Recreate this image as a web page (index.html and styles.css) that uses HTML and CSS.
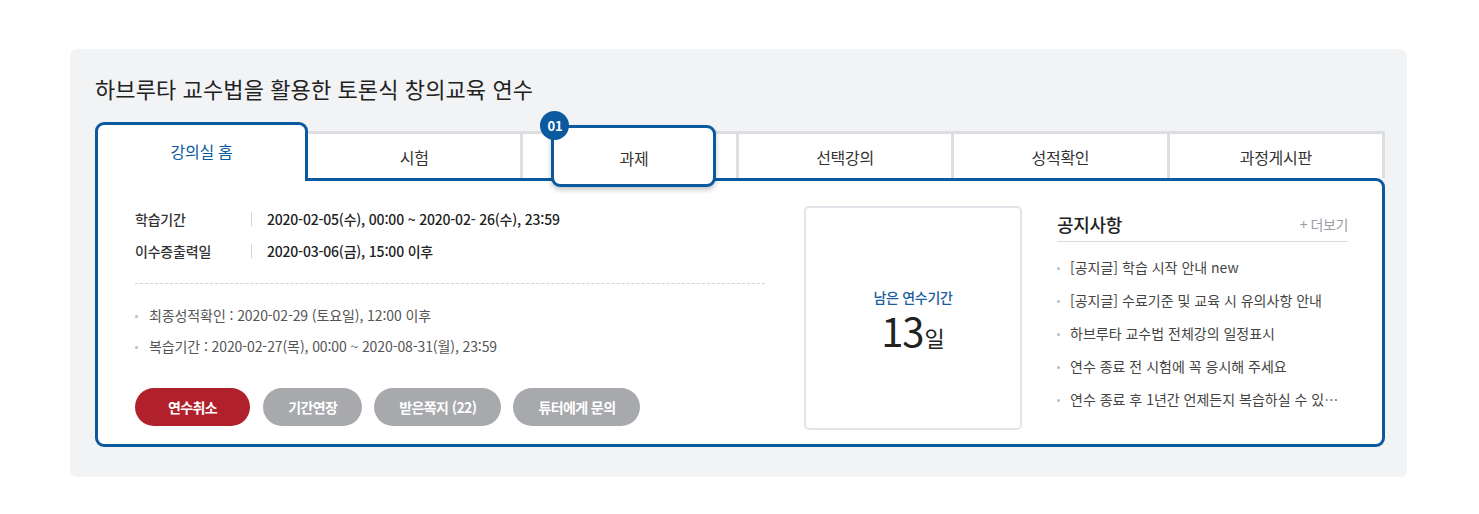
FILE: index.html
```html
<!DOCTYPE html>
<html lang="ko">
<head>
<meta charset="utf-8">
<title>강의실 홈</title>
<link rel="stylesheet" href="styles.css">
</head>
<body>
<div class="page">
  <section class="panel">
    <h1 class="course-title">하브루타 교수법을 활용한 토론식 창의교육 연수</h1>
    <nav class="tabs">
      <a class="tab tab-active">강의실 홈</a>
      <a class="tab">시험</a>
      <a class="tab tab-guided">
        <span class="tab-highlight">과제<span class="step-badge">01</span></span>
      </a>
      <a class="tab">선택강의</a>
      <a class="tab">성적확인</a>
      <a class="tab">과정게시판</a>
    </nav>
    <div class="content">
      <div class="info-col">
        <dl class="period-list">
          <div class="period-row"><dt>학습기간</dt><dd>2020-02-05(수), 00:00 ~ 2020-02- 26(수), 23:59</dd></div>
          <div class="period-row"><dt>이수증출력일</dt><dd>2020-03-06(금), 15:00 이후</dd></div>
        </dl>
        <ul class="note-list">
          <li>최종성적확인 : 2020-02-29 (토요일), 12:00 이후</li>
          <li>복습기간 : 2020-02-27(목), 00:00 ~ 2020-08-31(월), 23:59</li>
        </ul>
        <div class="btn-row">
          <button class="btn btn-red">연수취소</button>
          <button class="btn">기간연장</button>
          <button class="btn">받은쪽지 (22)</button>
          <button class="btn">튜터에게 문의</button>
        </div>
      </div>
      <div class="remain-box">
        <p class="remain-label">남은 연수기간</p>
        <p class="remain-value"><span class="remain-num">13</span><span class="remain-unit">일</span></p>
      </div>
      <div class="notice-col">
        <div class="notice-head">
          <h2>공지사항</h2>
          <a class="more">+ 더보기</a>
        </div>
        <ul class="notice-list">
          <li>[공지글] 학습 시작 안내 new</li>
          <li>[공지글] 수료기준 및 교육 시 유의사항 안내</li>
          <li>하브루타 교수법 전체강의 일정표시</li>
          <li>연수 종료 전 시험에 꼭 응시해 주세요</li>
          <li>연수 종료 후 1년간 언제든지 복습하실 수 있습니다</li>
        </ul>
      </div>
    </div>
  </section>
</div>
</body>
</html>
```

FILE: styles.css
```css
* { box-sizing: border-box; }
html, body { margin: 0; padding: 0; background: #fff; }
body {
  font-family: "Noto Sans CJK KR", "Noto Sans", sans-serif;
  color: #333;
}
.page {
  padding: 49px 72px 38px 70px;
}
.panel {
  background: #f2f3f5;
  border-radius: 7px;
  padding: 24px 22px 30px 25px;
}
.course-title {
  margin: 0 0 19px;
  font-size: 22px;
  line-height: 30px;
  font-weight: 400;
  color: #222;
  letter-spacing: 0.1px;
}
.tabs {
  display: flex;
  align-items: flex-end;
  height: 56px;
  position: relative;
  z-index: 2;
}
.tab {
  flex: 1;
  height: 47px;
  display: flex;
  align-items: center;
  justify-content: center;
  background: #fff;
  border-top: 3px solid #dcdee2;
  border-right: 3px solid #dcdee2;
  font-size: 16px;
  color: #333;
  padding-top: 2px;
  letter-spacing: -0.3px;
}
.tab-active {
  flex: 0 0 213px;
  height: 59px;
  margin-bottom: -3px;
  border: 3px solid #0b5aa0;
  border-bottom: none;
  border-radius: 9px 9px 0 0;
  color: #0b5aa0;
  align-items: flex-start;
  padding-top: 14px;
}
.tab-guided { position: relative; }
.tab-highlight {
  position: absolute;
  left: 28px;
  top: -9px;
  width: 165px;
  height: 62px;
  border: 3px solid #0b5aa0;
  border-radius: 9px;
  background: #fff;
  box-shadow: 0 3px 5px rgba(0,0,0,0.22);
  display: flex;
  align-items: center;
  justify-content: center;
  padding-top: 3px;
  font-size: 16px;
  color: #333;
}
.step-badge {
  position: absolute;
  left: -14px;
  top: -17px;
  width: 29px;
  height: 29px;
  border-radius: 50%;
  background: #0b5aa0;
  color: #fff;
  font-size: 13px;
  font-weight: 700;
  line-height: 29px;
  text-align: center;
  letter-spacing: -0.3px;
}
.content {
  position: relative;
  z-index: 1;
  background: #fff;
  border: 3px solid #0b5aa0;
  border-radius: 0 9px 9px 9px;
  display: flex;
  align-items: flex-start;
  padding: 22px 34px 14px 37px;
}
.info-col {
  width: 630px;
  flex: none;
}
.period-list { margin: 0; }
.period-row {
  display: flex;
  align-items: center;
  height: 32px;
  font-size: 14px;
  letter-spacing: -0.2px;
}
.period-row dt {
  width: 117px;
  color: #333;
  font-weight: 500;
  position: relative;
}
.period-row dt::after {
  content: "";
  position: absolute;
  right: 0;
  top: 50%;
  margin-top: -7px;
  width: 1px;
  height: 14px;
  background: #d3d5d9;
}
.period-row dd {
  margin: 0 0 0 15px;
  color: #222;
  font-weight: 500;
}
.note-list {
  list-style: none;
  margin: 16px 0 0;
  padding: 16px 0 0;
  border-top: 1px dashed #cfd2d6;
}
.note-list li {
  position: relative;
  padding-left: 14px;
  line-height: 31px;
  font-size: 14px;
  color: #555;
  letter-spacing: -0.1px;
}
.note-list li::before,
.notice-list li::before {
  content: "";
  position: absolute;
  left: 0;
  top: 50%;
  width: 3px;
  height: 3px;
  margin-top: -1px;
  border-radius: 50%;
  background: #b9bcc1;
}
.btn-row {
  display: flex;
  gap: 12px;
  margin-top: 26px;
}
.btn {
  height: 38px;
  border: none;
  border-radius: 19px;
  background: #a7a9ac;
  color: #fff;
  font-family: inherit;
  font-size: 14px;
  font-weight: 700;
  letter-spacing: -0.6px;
  padding: 0 25px;
}
.btn-red {
  background: #b0212b;
  padding: 0 33px;
  margin-right: 1px;
}
.remain-box {
  flex: none;
  width: 218px;
  height: 224px;
  margin: 3px 35px 0 39px;
  border: 2px solid #e1e4e9;
  border-radius: 5px;
  display: flex;
  flex-direction: column;
  align-items: center;
  justify-content: center;
  padding-top: 2px;
}
.remain-label {
  margin: 0;
  font-size: 14px;
  line-height: 18px;
  color: #1b5e9f;
  font-weight: 500;
  letter-spacing: -0.3px;
}
.remain-value {
  margin: 4px 0 0;
  display: flex;
  align-items: baseline;
  height: 40px;
  color: #222;
}
.remain-num {
  display: inline-block;
  font-size: 40px;
  line-height: 40px;
  height: 40px;
  font-weight: 400;
  letter-spacing: -1px;
}
.remain-unit {
  display: inline-block;
  font-size: 22px;
  line-height: 26px;
  margin-left: 1px;
}
.notice-col {
  flex: 1;
  min-width: 0;
}
.notice-head {
  display: flex;
  justify-content: space-between;
  align-items: center;
  padding: 8px 0 4px;
  border-bottom: 1px solid #d7dade;
}
.notice-head h2 {
  margin: 0;
  font-size: 18px;
  line-height: 26px;
  font-weight: 500;
  color: #222;
  letter-spacing: -0.3px;
}
.more {
  font-size: 14px;
  color: #9a9da2;
  letter-spacing: -0.4px;
}
.notice-list {
  list-style: none;
  margin: 9px 0 0;
  padding: 0;
}
.notice-list li {
  position: relative;
  padding-left: 13px;
  line-height: 33px;
  font-size: 14px;
  color: #444;
  letter-spacing: 0;
  white-space: nowrap;
  overflow: hidden;
  text-overflow: ellipsis;
}
```
